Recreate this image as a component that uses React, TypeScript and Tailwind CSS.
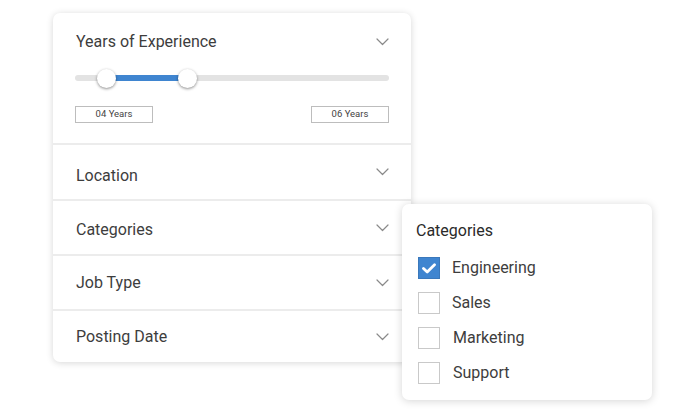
import React from "react";

const Chevron = () => (
  <svg width="13" height="8" viewBox="0 0 13 8" fill="none" className="shrink-0">
    <polyline points="1,1 6.5,6.5 12,1" stroke="#8a8a8a" strokeWidth="1.2" strokeLinecap="round" strokeLinejoin="round" />
  </svg>
);

const Row = ({ label, h, pt }: { label: string; h: string; pt: string }) => (
  <div className={`flex items-center justify-between pl-[23px] pr-[22px] ${h}`}>
    <span className={`text-[16px] leading-6 text-[#3d3d3d] ${pt}`}>{label}</span>
    <Chevron />
  </div>
);

const Divider = () => <div className="h-[2px] bg-[#ececec]" />;

const Check = ({ checked, label, ml }: { checked?: boolean; label: string; ml?: string }) => (
  <div className="flex items-center gap-[12px] h-[22px]">
    {checked ? (
      <div className="w-[22px] h-[22px] bg-[#3f85d0] border border-[#3a78bb] flex items-center justify-center">
        <svg width="14" height="11" viewBox="0 0 14 11" fill="none">
          <polyline points="1.5,5.5 5.2,9 12.5,1.8" stroke="#ffffff" strokeWidth="2.8" strokeLinecap="round" strokeLinejoin="round" />
        </svg>
      </div>
    ) : (
      <div className="w-[22px] h-[22px] border-[1.5px] border-[#c9c9c9] bg-white" />
    )}
    <span className={`text-[16px] leading-5 text-[#3d3d3d] ${ml ?? ""}`}>{label}</span>
  </div>
);

export default function App() {
  return (
    <div
      className="relative w-[700px] h-[417px] bg-white overflow-hidden"
      style={{ fontFamily: "Roboto, 'Noto Sans', Arial, sans-serif" }}
    >
      <div className="pt-[13px] pl-[53px]">
        <div className="w-[358px] bg-white rounded-[7px] shadow-[0_1px_7px_rgba(0,0,0,0.16)] overflow-hidden">
          <div className="h-[130px] px-[22px] pt-[17px]">
            <div className="flex items-center justify-between">
              <span className="text-[16px] leading-6 text-[#3d3d3d] pl-[1px]">Years of Experience</span>
              <Chevron />
            </div>
            <div className="relative mt-[15px] h-[18px]">
              <div className="absolute left-0 right-0 top-[6px] h-[6px] rounded-full bg-[#e3e3e3]" />
              <div className="absolute left-[31px] w-[82px] top-[6px] h-[6px] bg-[#3f85d0]" />
              <div className="absolute left-[22px] top-0 w-[19px] h-[19px] rounded-full bg-white shadow-[0_1px_3px_rgba(0,0,0,0.45)]" />
              <div className="absolute left-[103px] top-0 w-[19px] h-[19px] rounded-full bg-white shadow-[0_1px_3px_rgba(0,0,0,0.45)]" />
            </div>
            <div className="mt-[19px] flex justify-between">
              <div className="w-[78px] h-[17px] border border-[#bdbdbd] flex items-center justify-center text-[9.5px] text-[#444444]">04 Years</div>
              <div className="w-[78px] h-[17px] border border-[#bdbdbd] flex items-center justify-center text-[9.5px] text-[#444444]">06 Years</div>
            </div>
          </div>
          <Divider />
          <Row label="Location" h="h-[54px]" pt="pt-[7px]" />
          <Divider />
          <Row label="Categories" h="h-[53px]" pt="pt-[4px]" />
          <Divider />
          <Row label="Job Type" h="h-[53px]" pt="pt-[1px]" />
          <Divider />
          <Row label="Posting Date" h="h-[51px]" pt="pt-0" />
        </div>
      </div>

      <div className="absolute left-[402px] top-[204px] w-[250px] h-[196px] bg-white rounded-[7px] shadow-[0_1px_8px_rgba(0,0,0,0.17)] pl-[16px] pt-[17px]">
        <div className="-ml-[2px] text-[16px] leading-5 font-normal text-[#2a2a2a]">Categories</div>
        <div className="mt-[16px] flex flex-col gap-[13px]">
          <Check checked label="Engineering" />
          <Check label="Sales" />
          <Check label="Marketing" ml="ml-[1px]" />
          <Check label="Support" ml="ml-[1px]" />
        </div>
      </div>
    </div>
  );
}
